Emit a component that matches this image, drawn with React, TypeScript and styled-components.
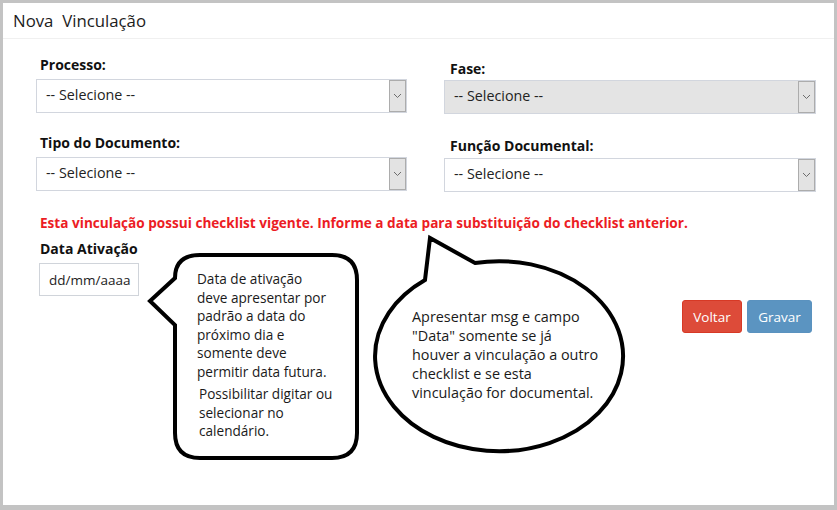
import React from "react";
import styled, { createGlobalStyle } from "styled-components";

const GlobalStyle = createGlobalStyle`
  html, body { margin: 0; padding: 0; }
  body { background: #c3c3c3; font-family: "Open Sans", "Noto Sans", sans-serif; }
  * { box-sizing: border-box; }
`;

const Frame = styled.div`
  width: 837px;
  height: 510px;
  padding: 3px 3px 5px 3px;
  background: #c3c3c3;
`;

const Panel = styled.div`
  position: relative;
  height: 100%;
  background: #fff;
  display: flex;
  flex-direction: column;
`;

const Header = styled.div`
  height: 36px;
  border-bottom: 1px solid #f0f0f0;
  padding-left: 10px;
  display: flex;
  align-items: center;
  font-size: 16.8px;
  color: #1c1c1c;
  white-space: pre;
`;

const Body = styled.div`
  padding: 16px 18px 0 33px;
  display: flex;
  flex-direction: column;
`;

const FormGrid = styled.div`
  display: grid;
  grid-template-columns: 371px 372px;
  column-gap: 37px;
`;

const Column = styled.div<{ $top: number; $gap: number }>`
  display: flex;
  flex-direction: column;
  padding-top: ${(p) => p.$top}px;
  gap: ${(p) => p.$gap}px;
`;

const Field = styled.div<{ $labelGap: number }>`
  display: flex;
  flex-direction: column;
  gap: ${(p) => p.$labelGap}px;
`;

const Label = styled.div<{ $indent?: number }>`
  height: 20px;
  line-height: 20px;
  padding-left: ${(p) => p.$indent ?? 4}px;
  font-weight: 700;
  font-size: 14px;
  color: #111;
  white-space: nowrap;
`;

const SelectBox = styled.div<{ $disabled?: boolean }>`
  height: 34px;
  display: flex;
  align-items: stretch;
  border: 1px solid #d2d6de;
  background: ${(p) => (p.$disabled ? "#e4e4e4" : "#fff")};
`;

const SelectText = styled.span`
  flex: 1;
  display: flex;
  align-items: center;
  padding: 0 0 4px 9px;
  font-size: 14.3px;
  color: #222;
`;

const ArrowBox = styled.span`
  width: 17px;
  border: 1px solid #acacac;
  background: #e3e3e3;
  display: flex;
  align-items: center;
  justify-content: center;
`;

const Alert = styled.div`
  margin-top: 21px;
  padding-left: 4px;
  height: 20px;
  line-height: 20px;
  color: #ec1c24;
  font-weight: 700;
  font-size: 13.6px;
  white-space: nowrap;
`;

const BottomRow = styled.div`
  margin-top: 6px;
  display: flex;
  justify-content: space-between;
  align-items: flex-start;
`;

const DateField = styled.div`
  display: flex;
  flex-direction: column;
  gap: 4px;
`;

const DateInput = styled.div`
  margin-left: 3px;
  width: 100px;
  height: 33px;
  border: 1px solid #d0d4da;
  padding-left: 9px;
  display: flex;
  align-items: center;
  font-size: 13.5px;
  color: #222;
`;

const Actions = styled.div`
  margin-top: 61px;
  margin-right: 4px;
  display: flex;
  gap: 5px;
`;

const Button = styled.button<{ $variant: "danger" | "primary" }>`
  height: 33px;
  padding: 0;
  width: ${(p) => (p.$variant === "danger" ? 60 : 65)}px;
  border-radius: 3px;
  border: 1px solid ${(p) => (p.$variant === "danger" ? "#d73925" : "#5a92bf")};
  background: ${(p) => (p.$variant === "danger" ? "#dd4b39" : "#5b94c1")};
  color: #fff;
  font-family: "Open Sans", "Noto Sans", sans-serif;
  font-size: 13.5px;
`;

const Bubble = styled.div<{ $x: number; $y: number; $w: number; $h: number }>`
  position: absolute;
  left: ${(p) => p.$x}px;
  top: ${(p) => p.$y}px;
  width: ${(p) => p.$w}px;
  height: ${(p) => p.$h}px;
`;

const BubbleShape = styled.svg`
  position: absolute;
  inset: 0;
  overflow: visible;
`;

const BubbleText = styled.div<{ $top: number; $left: number; $size: number; $line: number }>`
  position: relative;
  padding-top: ${(p) => p.$top}px;
  padding-left: ${(p) => p.$left}px;
  font-size: ${(p) => p.$size}px;
  line-height: ${(p) => p.$line}px;
  color: #1a1a1a;
  white-space: nowrap;
`;

const Para = styled.div<{ $shift?: number; $space?: number }>`
  margin-left: ${(p) => p.$shift ?? 0}px;
  margin-top: ${(p) => p.$space ?? 0}px;
`;

const Chevron = () => (
  <svg width="9" height="6" viewBox="0 0 9 6">
    <polyline points="1,1 4.5,4.5 8,1" fill="none" stroke="#6d6d6d" strokeWidth="1" />
  </svg>
);

const Select = ({ disabled }: { disabled?: boolean }) => (
  <SelectBox $disabled={disabled}>
    <SelectText>-- Selecione --</SelectText>
    <ArrowBox>
      <Chevron />
    </ArrowBox>
  </SelectBox>
);

export default function App() {
  return (
    <>
      <GlobalStyle />
      <Frame>
        <Panel>
          <Header>Nova  Vinculação</Header>
          <Body>
            <FormGrid>
              <Column $top={0} $gap={20}>
                <Field $labelGap={4}>
                  <Label>Processo:</Label>
                  <Select />
                </Field>
                <Field $labelGap={4}>
                  <Label>Tipo do Documento:</Label>
                  <Select />
                </Field>
              </Column>
              <Column $top={4} $gap={22}>
                <Field $labelGap={1}>
                  <Label $indent={6}>Fase:</Label>
                  <Select disabled />
                </Field>
                <Field $labelGap={2}>
                  <Label $indent={6}>Função Documental:</Label>
                  <Select />
                </Field>
              </Column>
            </FormGrid>
            <Alert>
              Esta vinculação possui checklist vigente. Informe a data para substituição do checklist anterior.
            </Alert>
            <BottomRow>
              <DateField>
                <Label>Data Ativação</Label>
                <DateInput>dd/mm/aaaa</DateInput>
              </DateField>
              <Actions>
                <Button $variant="danger">Voltar</Button>
                <Button $variant="primary">Gravar</Button>
              </Actions>
            </BottomRow>
          </Body>

          <Bubble $x={145} $y={250} $w={212} $h={208}>
            <BubbleShape width="212" height="208" viewBox="0 0 212 208">
              <path
                d="M 27 25 Q 27 2 52 2 L 184 2 Q 209 2 209 27 L 209 180 Q 209 205 184 205 L 52 205 Q 27 205 27 180 L 27 72 L 2 48 Z"
                fill="#fff"
                stroke="#000"
                strokeWidth="4"
                strokeLinejoin="miter"
              />
            </BubbleShape>
            <BubbleText $top={17} $left={49} $size={13.6} $line={18.5}>
              <Para>
                Data de ativação
                <br />
                deve apresentar por
                <br />
                padrão a data do
                <br />
                próximo dia e
                <br />
                somente deve
                <br />
                permitir data futura.
              </Para>
              <Para $shift={2} $space={4}>
                Possibilitar digitar ou
                <br />
                selecionar no
                <br />
                calendário.
              </Para>
            </BubbleText>
          </Bubble>

          <Bubble $x={369} $y={231} $w={256} $h={222}>
            <BubbleShape width="256" height="222" viewBox="0 0 256 222">
              <path
                d="M 53 46 L 58 4 L 103 29 A 124 95 0 1 1 53 46 Z"
                fill="#fff"
                stroke="#000"
                strokeWidth="4"
                strokeLinejoin="miter"
              />
            </BubbleShape>
            <BubbleText $top={73} $left={40} $size={14.4} $line={19}>
              Apresentar msg e campo
              <br />
              "Data" somente se já
              <br />
              houver a vinculação a outro
              <br />
              checklist e se esta
              <br />
              vinculação for documental.
            </BubbleText>
          </Bubble>
        </Panel>
      </Frame>
    </>
  );
}
